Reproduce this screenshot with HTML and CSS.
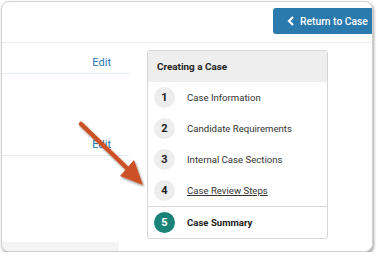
FILE: index.html
```html
<!DOCTYPE html>
<html lang="en">
<head>
  <meta charset="UTF-8" />
  <title>Case Summary</title>
  <link rel="stylesheet" href="styles.css">
</head>
<body>
  <div class="frame">
    <div class="topbar">
      <button class="return-btn">
        <svg class="chev" width="8" height="10" viewBox="0 0 8 10"><path d="M6 1 L2 5 L6 9" fill="none" stroke="#fff" stroke-width="2.2"/></svg>
        Return to Case
      </button>
    </div>
    <div class="content">
      <div class="row row-first"><a class="edit">Edit</a></div>
      <div class="row row-second"><a class="edit">Edit</a></div>
      <div class="footer-block"></div>
    </div>

    <div class="steps">
      <div class="steps-head">Creating a Case</div>
      <ul class="step-list">
        <li class="step"><span class="num">1</span><span class="label">Case Information</span></li>
        <li class="step"><span class="num">2</span><span class="label">Candidate Requirements</span></li>
        <li class="step"><span class="num">3</span><span class="label">Internal Case Sections</span></li>
        <li class="step"><span class="num">4</span><span class="label link">Case Review Steps</span></li>
        <li class="step current"><span class="num">5</span><span class="label">Case Summary</span></li>
      </ul>
    </div>

    <svg class="arrow" width="80" height="80" viewBox="0 0 80 80">
      <defs>
        <filter id="sh" x="-20%" y="-20%" width="140%" height="140%">
          <feDropShadow dx="1" dy="1.5" stdDeviation="1.2" flood-color="#000" flood-opacity="0.45"/>
        </filter>
      </defs>
      <g filter="url(#sh)">
        <line x1="5" y1="5" x2="54" y2="52" stroke="#cc5126" stroke-width="4.5" stroke-linecap="round"/>
        <polygon points="67,66 44,57 58,41" fill="#cc5126"/>
      </g>
    </svg>
  </div>
</body>
</html>
```

FILE: styles.css
```css
body {
  margin: 0;
  background: #fff;
  font-family: Roboto, "Liberation Sans", sans-serif;
}

.frame {
  position: relative;
  margin: 1px 0 0 1px;
  width: 372px;
  height: 251px;
  box-sizing: border-box;
  border: 1px solid #cfcfcf;
  border-radius: 8px;
  box-shadow: 1px 2px 3px rgba(0,0,0,0.35);
  overflow: hidden;
  background: #fff;
}

.topbar {
  height: 41px;
  border-bottom: 1px solid #ececec;
  display: flex;
  justify-content: flex-end;
  align-items: flex-start;
  padding-top: 6px;
  box-sizing: border-box;
}

.return-btn {
  height: 26px;
  width: 102px;
  margin-right: -3px;
  border: none;
  border-radius: 3px;
  background: #2a7aae;
  color: #fff;
  font-family: inherit;
  font-size: 10.3px;
  font-weight: 500;
  display: flex;
  align-items: center;
  gap: 5px;
  padding: 0 0 0 14px;
  white-space: nowrap;
}

.chev {
  display: block;
}

.content {
  width: 127px;
}

.row {
  border-bottom: 1px solid #e4ebf2;
  display: flex;
  justify-content: flex-end;
  align-items: flex-end;
  padding-right: 18px;
}

.row-first {
  height: 30px;
}

.row-second {
  height: 81px;
}

.edit {
  color: #2a77b2;
  font-size: 11px;
  padding-bottom: 4px;
}

.footer-block {
  margin-top: 86px;
  width: 117px;
  height: 12px;
  background: #f4f4f4;
}

.steps {
  position: absolute;
  left: 145px;
  top: 48px;
  width: 181px;
  box-sizing: border-box;
  border: 1px solid #d6d6d6;
  border-radius: 3px;
  background: #fff;
  overflow: hidden;
}

.steps-head {
  background: #eeeeee;
  height: 31px;
  line-height: 31px;
  padding-left: 9px;
  font-size: 9.9px;
  font-weight: 700;
  color: #222;
}

.step-list {
  list-style: none;
  margin: 0;
  padding: 0;
}

.step {
  display: flex;
  align-items: center;
  height: 31px;
  padding-left: 6px;
  font-size: 9.6px;
  color: #333;
}

.num {
  width: 21px;
  height: 21px;
  border-radius: 50%;
  background: #ededed;
  color: #222;
  font-weight: 700;
  font-size: 11px;
  display: flex;
  align-items: center;
  justify-content: center;
  margin-right: 12px;
}

.link {
  text-decoration: underline;
}

.step.current {
  border-top: 1px solid #d6d6d6;
  height: 31px;
}

.step.current .num {
  background: #1b8278;
  color: #fff;
}

.step.current .label {
  font-weight: 700;
  color: #222;
}

.arrow {
  position: absolute;
  left: 74px;
  top: 117px;
}
```
